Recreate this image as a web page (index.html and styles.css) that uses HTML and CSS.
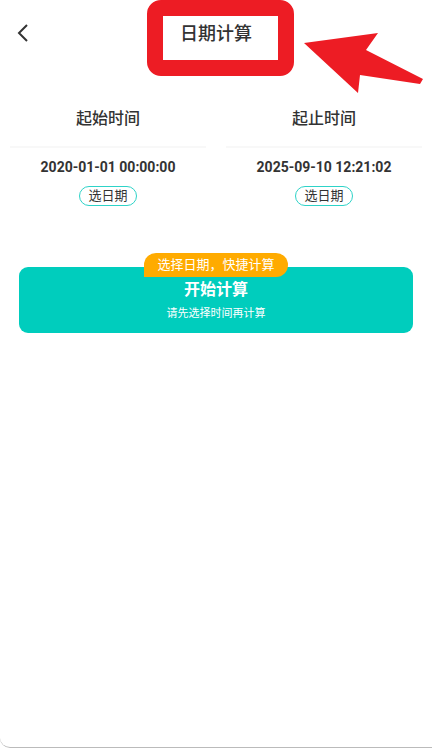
FILE: index.html
```html
<!DOCTYPE html>
<html>
<head>
<meta charset="utf-8">
<title>日期计算</title>
<link rel="stylesheet" href="styles.css">
</head>
<body>

<div class="page">
	<div class="header">
		<span class="back">
			<svg width="12" height="18" viewBox="0 0 12 18"><path d="M10 1 L2 9 L10 17" fill="none" stroke="#333" stroke-width="2"/></svg>
		</span>
		<div class="title">日期计算</div>
	</div>

	<div class="times">
		<div class="col">
			<div class="label">起始时间</div>
			<div class="line"></div>
			<div class="date">2020-01-01 00:00:00</div>
			<span class="pick">选日期</span>
		</div>
		<div class="col">
			<div class="label">起止时间</div>
			<div class="line"></div>
			<div class="date">2025-09-10 12:21:02</div>
			<span class="pick">选日期</span>
		</div>
	</div>

	<div class="calc">
		<span class="tag">选择日期，快捷计算</span>
		<div class="calc-title">开始计算</div>
		<div class="calc-sub">请先选择时间再计算</div>
	</div>

	<!-- annotation drawn over the screenshot -->
	<svg class="mark" width="432" height="100" viewBox="0 0 432 100">
		<rect x="155" y="8" width="131" height="60" rx="6" fill="none" stroke="#ed1c24" stroke-width="16"/>
		<polygon points="304,43 378,33 366,50 423,79 420,84 360,75 358,93" fill="#ed1c24"/>
	</svg>
</div>

</body>
</html>
```

FILE: styles.css
```css
* {margin:0; padding:0; box-sizing:border-box;}

body {background:#fff; font-family:Roboto, "Noto Sans CJK SC", sans-serif; color:#333;}

.page {position:relative; width:432px; height:748px; overflow:hidden; border-bottom:1px solid #bbb; border-radius:0 0 0 10px;}

.header {height:68px; display:flex; align-items:center; justify-content:center; position:relative;}
.back {position:absolute; left:17px; top:24px; width:12px; height:18px;}
.title {font-size:18px; font-weight:500; color:#333; line-height:24px;}

.mark {position:absolute; left:0; top:0;}

.times {display:grid; grid-template-columns:1fr 1fr; margin-top:40px;}
.col {display:flex; flex-direction:column; align-items:center; padding:0 10px;}
.label {font-size:16px; line-height:22px; color:#333; font-weight:500;}
.line {align-self:stretch; height:2px; background:#f8f8f8; margin-top:16px;}
.date {font-size:14px; line-height:20px; font-weight:bold; color:#333; margin-top:9px;}
.pick {display:block; margin-top:9px; width:58px; height:20px; line-height:18px; border:1px solid #2ed3c8; border-radius:10px; font-size:13px; text-align:center; color:#333;}

.calc {position:relative; margin:61px 19px 0; height:66px; background:#00cdbd; border-radius:9px; display:flex; flex-direction:column; align-items:center; padding-top:12px; color:#fff;}
.tag {position:absolute; top:-14px; left:125px; width:144px; height:24px; line-height:24px; background:#ffab00; border-radius:12px 12px 12px 0; font-size:13px; text-align:center; color:#fff;}
.calc-title {font-size:16px; line-height:22px; font-weight:bold;}
.calc-sub {font-size:11px; line-height:16px; margin-top:5px;}
```
